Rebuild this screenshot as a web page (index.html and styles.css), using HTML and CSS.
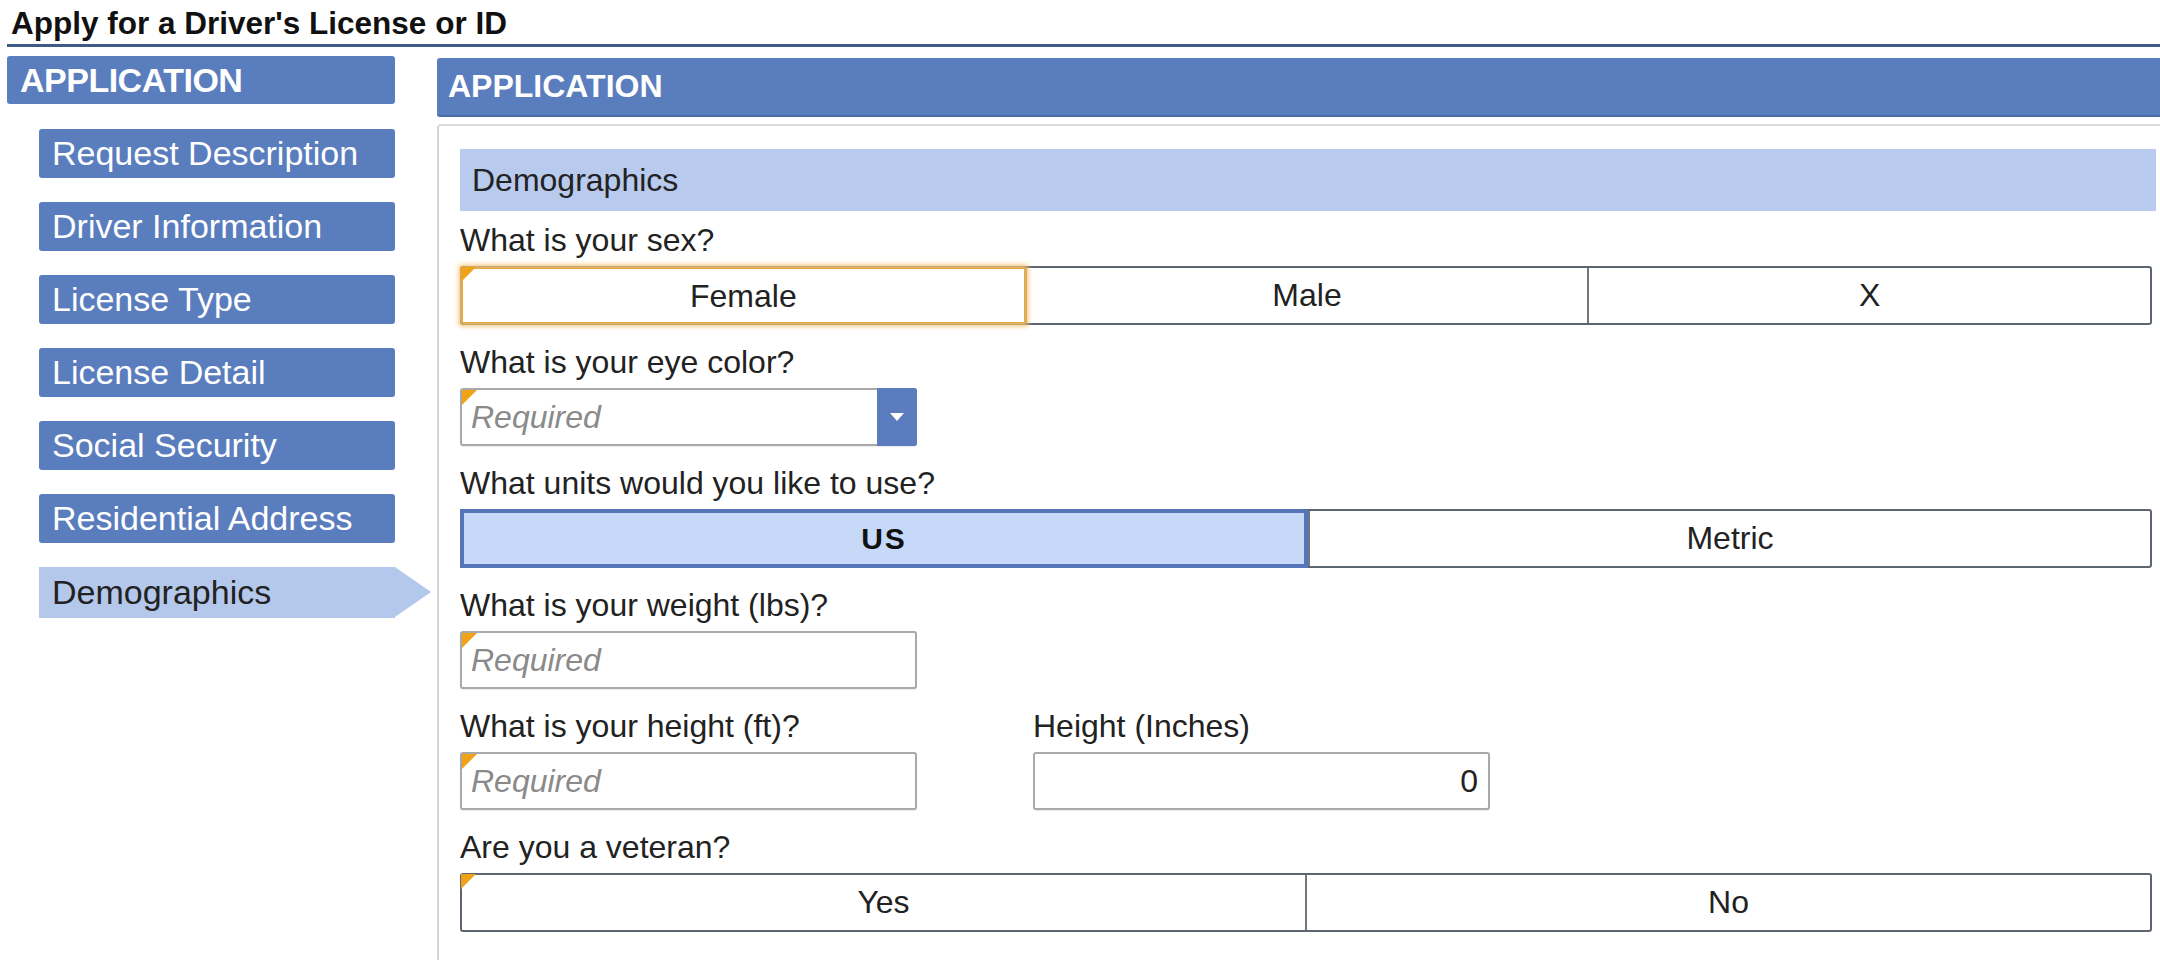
FILE: index.html
```html
<!DOCTYPE html>
<html>
<head>
<meta charset="utf-8">
<link rel="stylesheet" href="styles.css">
</head>
<body>
<div class="title">Apply for a Driver's License or ID</div>
<div class="main">
  <nav class="nav">
    <div class="nav-head">APPLICATION</div>
    <div class="nav-item">Request Description</div>
    <div class="nav-item">Driver Information</div>
    <div class="nav-item">License Type</div>
    <div class="nav-item">License Detail</div>
    <div class="nav-item">Social Security</div>
    <div class="nav-item">Residential Address</div>
    <div class="nav-item active">Demographics</div>
  </nav>
  <section class="content">
    <div class="content-head">APPLICATION</div>
    <div class="panel">
      <div class="section-head">Demographics</div>

      <div class="field first">
        <div class="label">What is your sex?</div>
        <div class="seg focus req">
          <div class="opt">Female</div>
          <div class="opt">Male</div>
          <div class="opt">X</div>
        </div>
      </div>

      <div class="field">
        <div class="label">What is your eye color?</div>
        <div class="select req">
          <div class="ph">Required</div>
          <div class="drop"><svg width="16" height="10" viewBox="0 0 16 10"><path d="M1 1 L15 1 L8 9 Z" fill="#fff"/></svg></div>
        </div>
      </div>

      <div class="field">
        <div class="label">What units would you like to use?</div>
        <div class="seg">
          <div class="opt sel">US</div>
          <div class="opt">Metric</div>
        </div>
      </div>

      <div class="field">
        <div class="label">What is your weight (lbs)?</div>
        <div class="input req"><span class="ph">Required</span></div>
      </div>

      <div class="row">
        <div class="field">
          <div class="label">What is your height (ft)?</div>
          <div class="input req"><span class="ph">Required</span></div>
        </div>
        <div class="field">
          <div class="label">Height (Inches)</div>
          <div class="input num">0</div>
        </div>
      </div>

      <div class="field">
        <div class="label">Are you a veteran?</div>
        <div class="seg req">
          <div class="opt">Yes</div>
          <div class="opt">No</div>
        </div>
      </div>
    </div>
  </section>
</div>
</body>
</html>
```
FILE: styles.css
```css
* { box-sizing: border-box; }
html, body { margin: 0; padding: 0; background: #fff; }
body {
  font-family: "Liberation Sans", Arial, sans-serif;
  color: #1e1e1e;
  width: 2160px;
  height: 960px;
  overflow: hidden;
}
.title {
  margin-left: 7px;
  padding: 3px 0 0 4px;
  height: 47px;
  font-size: 31.5px;
  font-weight: bold;
  line-height: 40px;
  color: #111;
  border-bottom: 3px solid #3d5c85;
}
.main {
  display: flex;
  align-items: flex-start;
}
.nav {
  width: 388px;
  margin-left: 7px;
  margin-top: 9px;
  flex: none;
}
.nav-head {
  height: 48px;
  background: #5a7dbd;
  border-radius: 3px;
  color: #fff;
  font-weight: bold;
  font-size: 34px;
  line-height: 48px;
  padding-left: 13px;
  letter-spacing: -0.5px;
}
.nav-item {
  position: relative;
  margin-left: 32px;
  margin-top: 24px;
  height: 49px;
  background: #5a7dbd;
  border-radius: 3px;
  color: #fff;
  font-size: 34px;
  line-height: 49px;
  padding-left: 13px;
}
.nav-head + .nav-item { margin-top: 25px; }
.nav-item.active {
  background: #b4c8ec;
  color: #222;
  height: 51px;
  line-height: 51px;
  border-radius: 0;
}
.nav-item.active::after {
  content: "";
  position: absolute;
  left: 100%;
  top: 0;
  border-top: 25.5px solid transparent;
  border-bottom: 25.5px solid transparent;
  border-left: 36px solid #b4c8ec;
}
.content {
  flex: 1;
  margin-left: 42px;
  margin-top: 11px;
}
.content-head {
  height: 59px;
  background: #5a7dbd;
  border-bottom: 2px solid #4b6ba8;
  border-radius: 3px 0 0 3px;
  color: #fff;
  font-weight: bold;
  font-size: 32px;
  line-height: 57px;
  padding-left: 11px;
}
.panel {
  margin-top: 7px;
  border-top: 2px solid #dcdcd6;
  border-left: 2px solid #d6d6d6;
  border-top-left-radius: 4px;
  padding: 23px 4px 40px 21px;
  height: 840px;
}
.section-head {
  height: 62px;
  background: #b8caed;
  font-size: 32px;
  line-height: 62px;
  padding-left: 12px;
  color: #222;
}
.field { margin-top: 19px; }
.field.first { margin-top: 11px; }
.label {
  font-size: 32px;
  line-height: 37px;
  height: 37px;
  margin-bottom: 7px;
  color: #222;
}
.seg {
  position: relative;
  display: flex;
  height: 59px;
  margin-right: 4px;
  border: 2px solid #5d6670;
  border-radius: 3px;
  background: #fff;
}
.seg .opt {
  flex: 1;
  text-align: center;
  font-size: 32px;
  line-height: 55px;
  color: #222;
  border-left: 2px solid #6f7780;
}
.seg .opt:first-child { border-left: none; }
.seg.focus .opt:first-child {
  box-shadow: 0 0 5px 3px #f6c06a;
  border: 1px solid #e9a640;
  position: relative;
  z-index: 1;
}
.seg .opt.sel {
  background: #c7d9f8;
  border: 4px solid #5475b8;
  margin: -2px 0 -2px -2px;
  line-height: 51px;
  font-weight: bold;
  font-size: 30px;
  letter-spacing: 2px;
  color: #111;
}
.req::before {
  content: "";
  position: absolute;
  left: 0;
  top: 0;
  z-index: 2;
  border-top: 15px solid #f0a318;
  border-right: 15px solid transparent;
}
.seg.req::before { left: -1px; top: -1px; }
.select, .input {
  position: relative;
  width: 457px;
  height: 58px;
  border: 2px solid #a9a9a9;
  border-radius: 3px;
  background: #fff;
  display: flex;
  align-items: center;
  box-shadow: 0 1px 1px rgba(0,0,0,0.08);
}
.ph {
  font-style: italic;
  color: #8a8a8a;
  font-size: 32px;
  padding-left: 9px;
  flex: 1;
}
.drop {
  width: 40px;
  height: 58px;
  margin: -2px -2px -2px 0;
  background: #5b7dc0;
  border-radius: 0 3px 3px 0;
  display: flex;
  align-items: center;
  justify-content: center;
}
.row {
  display: flex;
  gap: 116px;
}
.input.num {
  justify-content: flex-end;
  padding-right: 10px;
  font-size: 32px;
  color: #222;
}
```
